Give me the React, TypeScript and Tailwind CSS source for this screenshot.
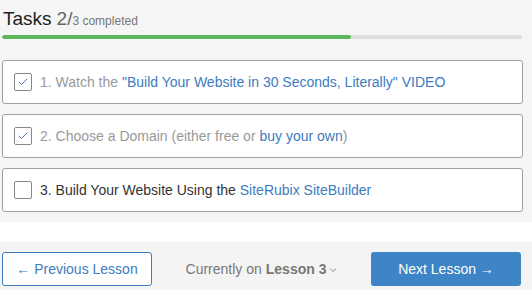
import { Check } from 'lucide-react';

const tasks = [
  {
    done: true,
    parts: [
      { t: '1. Watch the ' },
      { t: '"Build Your Website in 30 Seconds, Literally" VIDEO', link: true },
    ],
  },
  {
    done: true,
    parts: [
      { t: '2. Choose a Domain (either free or ' },
      { t: 'buy your own', link: true },
      { t: ')' },
    ],
  },
  {
    done: false,
    parts: [
      { t: '3. Build Your Website Using the ' },
      { t: 'SiteRubix SiteBuilder', link: true },
    ],
  },
];

export default function App() {
  return (
    <div className="w-[532px] h-[290px] bg-white font-['Liberation_Sans',Arial,sans-serif] overflow-hidden">
      <div className="bg-[#f5f5f5] px-[2px] pb-[10px]">
        <div className="h-[32px] flex items-end pl-[1px] pb-[4px]">
          <span className="text-[19px] leading-none text-[#222]">Tasks</span>
          <span className="text-[19px] leading-none text-[#666] ml-[5px]">2/</span>
          <span className="text-[12px] leading-none text-[#777] mb-[1px]">3 completed</span>
        </div>
        <div className="mt-[3px] w-[520px] h-[4px] rounded-full bg-[#dedede] overflow-hidden">
          <div className="h-full w-[349px] bg-[#5cb85c] rounded-full" />
        </div>
        <div className="mt-[21px] w-[521px] flex flex-col gap-[10px]">
          {tasks.map((task, i) => (
            <div
              key={i}
              className="h-[44px] bg-white border border-[#a0a0a0] rounded-[3px] flex items-center pl-[11px]"
            >
              <div className="w-[18px] h-[18px] border border-[#888] rounded-[2px] bg-white flex items-center justify-center">
                {task.done && <Check size={12} strokeWidth={1.75} className="text-[#2f64a8]" />}
              </div>
              <span className={`ml-[8px] text-[14px] ${task.done ? 'text-[#999]' : 'text-[#333]'}`}>
                {task.parts.map((p, j) =>
                  p.link ? (
                    <span key={j} className="text-[#3d7cc0]">{p.t}</span>
                  ) : (
                    <span key={j}>{p.t}</span>
                  )
                )}
              </span>
            </div>
          ))}
        </div>
      </div>
      <div className="h-[20px] bg-white" />
      <div className="h-[48px] bg-[#f4f4f4] flex items-start pt-[10px] px-[2px]">
        <button className="w-[150px] h-[34px] bg-white border border-[#3d7cc0] rounded-[3px] text-[#3d7cc0] text-[14px]">
          ← Previous Lesson
        </button>
        <div className="flex-1 h-[34px] flex items-center justify-center text-[14px] text-[#777]">
          <span>Currently on</span>
          <span className="ml-[4px] font-bold">Lesson 3</span>
          <svg width="8" height="6" viewBox="0 0 8 6" className="ml-[3px] mt-[2px]">
            <path d="M1 1.5 L4 4.5 L7 1.5" fill="none" stroke="#888" strokeWidth="1" />
          </svg>
        </div>
        <button className="w-[150px] h-[34px] bg-[#3d85c6] rounded-[3px] text-white text-[14px] mr-[9px]">
          Next Lesson →
        </button>
      </div>
    </div>
  );
}
